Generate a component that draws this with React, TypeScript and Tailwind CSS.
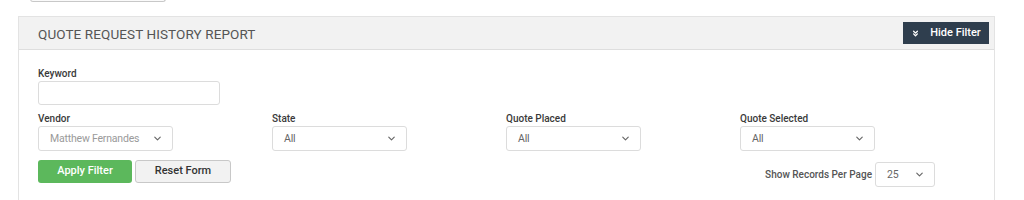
import { ChevronDown, ChevronsDown } from 'lucide-react';

function SelectBox({ value, width, muted }: { value: string; width: string; muted?: boolean }) {
  return (
    <div
      className={`${width} h-[25px] flex items-center justify-between pl-[11px] pr-[9px] border border-[#dcdcdc] rounded-[3px] bg-white text-[10.5px] ${
        muted ? 'text-[#9a9a9a]' : 'text-[#666]'
      }`}
    >
      <span className="tracking-[-0.2px]">{value}</span>
      <ChevronDown className="w-[11px] h-[11px] text-[#666]" strokeWidth={2.5} />
    </div>
  );
}

function Field({ label, children }: { label: string; children: React.ReactNode }) {
  return (
    <div className="flex flex-col">
      <label className="text-[10px] font-medium text-[#3a3a3a] leading-[13px] mb-[1px]">{label}</label>
      {children}
    </div>
  );
}

export default function App() {
  const filters = [
    { label: 'Vendor', value: 'Matthew Fernandes', muted: true },
    { label: 'State', value: 'All' },
    { label: 'Quote Placed', value: 'All' },
    { label: 'Quote Selected', value: 'All' },
  ];

  return (
    <div className="w-[1024px] h-[200px] bg-white overflow-hidden" style={{ fontFamily: 'Roboto, "Liberation Sans", sans-serif' }}>
      {/* leftover button from above */}
      <div className="ml-[30px] w-[136px] h-[3px] -mt-[1px] border border-t-0 border-[#c8c8c8] rounded-b-[3px] bg-[#fafafa]" />

      {/* Panel */}
      <div className="ml-[18px] mt-[14px] w-[977px] border border-[#e3e3e3] border-b-0">
        <div className="h-[33px] bg-[#f2f2f2] border-b border-[#dedede] flex items-center justify-between pl-[19px] pr-[5px]">
          <h2 className="text-[13.5px] text-[#555] uppercase tracking-[0.1px] mt-[2px]">Quote Request History Report</h2>
          <button className="h-[22px] w-[86px] bg-[#2f3e4e] text-white text-[11px] font-medium flex items-center justify-center gap-[10px]">
            <ChevronsDown className="w-[9px] h-[9px]" strokeWidth={3.5} />
            Hide Filter
          </button>
        </div>

        <div className="pl-[19px] pt-[17px] pb-[20px] h-[150px]">
          <Field label="Keyword">
            <div className="w-[182px] h-[24px] border border-[#dcdcdc] rounded-[3px] bg-white" />
          </Field>

          <div className="grid grid-cols-[234px_234px_234px_234px] mt-[7px]">
            {filters.map((f) => (
              <Field key={f.label} label={f.label}>
                <SelectBox value={f.value} width="w-[135px]" muted={f.muted} />
              </Field>
            ))}
          </div>

          <div className="flex items-start mt-[9px]">
            <button className="w-[94px] h-[23px] bg-[#5cb85c] rounded-[3px] text-white text-[11px] font-medium">
              Apply Filter
            </button>
            <button className="ml-[3px] w-[96px] h-[23px] bg-[#f2f2f2] border border-[#c8c8c8] rounded-[3px] text-[#333] text-[11px] font-medium">
              Reset Form
            </button>
            <div className="ml-auto mr-[59px] mt-[2px] flex items-center gap-[3px]">
              <span className="text-[10px] font-medium text-[#555]">Show Records Per Page</span>
              <SelectBox value="25" width="w-[60px]" />
            </div>
          </div>
        </div>
      </div>
    </div>
  );
}
